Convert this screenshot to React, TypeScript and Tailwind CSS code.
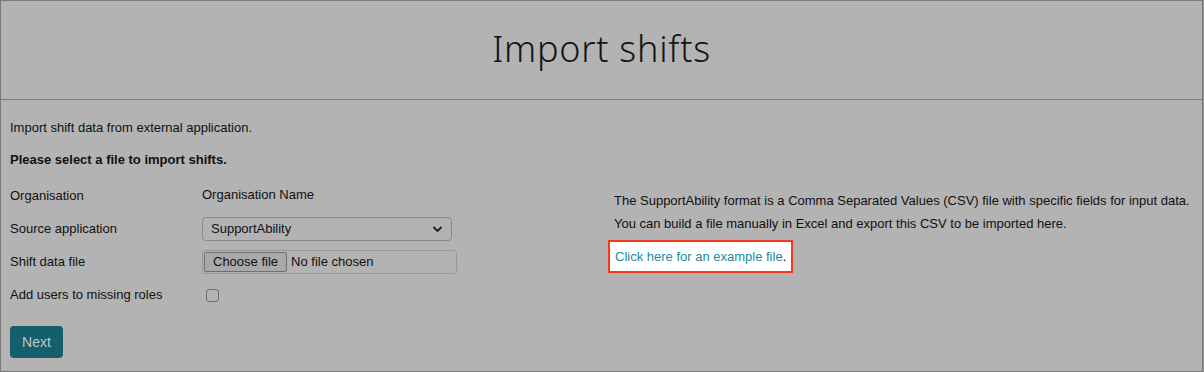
export default function App() {
  const rows = [
    { label: "Organisation", h: "h-[32px]" },
    { label: "Source application", h: "h-[33px]" },
    { label: "Shift data file", h: "h-[33px]" },
    { label: "Add users to missing roles", h: "h-[33px]" },
  ];

  return (
    <div className="h-[372px] w-[1204px] bg-[#8f8f8f] font-['Liberation_Sans',Arial,sans-serif] text-[13px] text-[#111]">
      <div className="flex h-[372px] w-[1203px] flex-col border border-[#7a7a7a] bg-[#b3b3b3]">
        {/* header */}
        <div className="flex h-[99px] shrink-0 items-center justify-center border-b border-[#7a7a7a]">
          <h1 className="pb-[2px] font-['Noto_Sans',sans-serif] text-[36px] font-light leading-none tracking-[0.75px] text-[#151515]">
            Import shifts
          </h1>
        </div>

        {/* body */}
        <div className="px-[9px] pt-[20px]">
          <p className="leading-[15px]">Import shift data from external application.</p>
          <p className="mt-[17px] font-bold leading-[15px]">Please select a file to import shifts.</p>

          <div className="mt-[13px] grid grid-cols-[598px_1fr]">
            {/* form */}
            <div className="flex flex-col">
              {rows.map((r, i) => (
                <div key={r.label} className={`grid ${r.h} grid-cols-[192px_1fr] items-center`}>
                  <span>{r.label}</span>
                  {i === 0 && <span className="-mt-[2px]">Organisation Name</span>}
                  {i === 1 && (
                    <div className="flex h-[24px] w-[250px] items-center justify-between rounded-[4px] border border-[#8a8a8a] pl-[8px] pr-[8px]">
                      <span>SupportAbility</span>
                      <svg width="11" height="8" viewBox="0 0 11 8" fill="none">
                        <path d="M1.5 2l4 4 4-4" stroke="#1a1a1a" strokeWidth="1.8" />
                      </svg>
                    </div>
                  )}
                  {i === 2 && (
                    <div className="flex h-[24px] w-[255px] items-center rounded-[3px] border border-[#999] pl-[1px]">
                      <span className="flex h-[20px] items-center rounded-[2px] border border-[#6f6f6f] bg-[#a9a9a9] px-[8px]">
                        Choose file
                      </span>
                      <span className="pl-[4px]">No file chosen</span>
                    </div>
                  )}
                  {i === 3 && (
                    <span className="ml-[4px] mt-[2px] h-[13px] w-[13px] rounded-[3px] border border-[#6e6e6e]" />
                  )}
                </div>
              ))}
              <div className="pt-[15px]">
                <button className="h-[32px] w-[53px] rounded-[4px] bg-[#155f6b] text-[14px] text-[#bfc7c9]">
                  Next
                </button>
              </div>
            </div>

            {/* help */}
            <div className="flex flex-col pt-[13px]">
              <p className="pl-[6px] leading-[15px]">
                The SupportAbility format is a Comma Separated Values (CSV) file with specific fields for input data.
              </p>
              <p className="mt-[8px] pl-[6px] leading-[15px]">
                You can build a file manually in Excel and export this CSV to be imported here.
              </p>
              <div className="mt-[9px] flex h-[33px] w-[185px] items-center border-2 border-[#f5391a] bg-white pl-[5px]">
                <span>
                  <a className="text-[#1a8ba0]">Click here for an example file</a>
                  <span className="text-black">.</span>
                </span>
              </div>
            </div>
          </div>
        </div>
      </div>
    </div>
  );
}
